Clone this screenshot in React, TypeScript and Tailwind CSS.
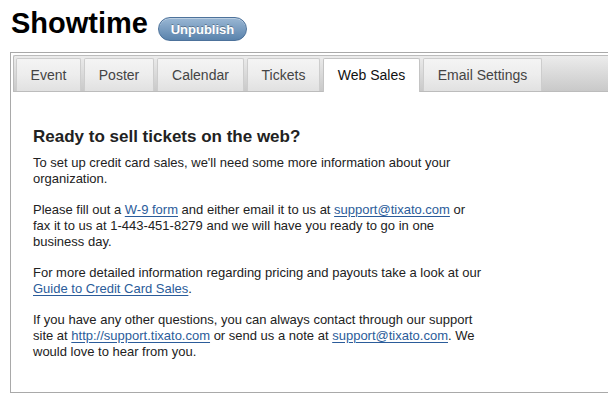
const tabs = [
  { label: "Event", w: "w-[65px]" },
  { label: "Poster", w: "w-[70px]" },
  { label: "Calendar", w: "w-[87px]" },
  { label: "Tickets", w: "w-[73px]" },
  { label: "Web Sales", w: "w-[97px]" },
  { label: "Email Settings", w: "w-[119px]" },
];
const active = "Web Sales";

function Link({ children }: { children: React.ReactNode }) {
  return (
    <a href="#" className="text-[#2b5c9a] underline underline-offset-[2px]">
      {children}
    </a>
  );
}

export default function App() {
  return (
    <div className="w-[608px] h-[403px] overflow-hidden bg-white font-['Liberation_Sans',Arial,sans-serif] text-[#222]">
      {/* Header */}
      <div className="flex items-start pt-[6px] pl-[11px]">
        <h1 className="text-[29px] leading-[34px] font-bold text-black">Showtime</h1>
        <button className="ml-[10px] mt-[11px] h-[24px] w-[89px] rounded-full border border-[#4d729b] bg-gradient-to-b from-[#9ab7d4] to-[#5a83ac] text-white text-[13px] font-bold leading-none shadow-[inset_0_1px_0_rgba(255,255,255,0.35)] [text-shadow:0_-1px_0_rgba(0,0,0,0.3)]">
          Unpublish
        </button>
      </div>

      {/* Panel */}
      <div className="ml-[10px] mt-[11px] w-[640px] border border-[#a9a9a9] border-r-0">
        {/* Tab bar */}
        <div className="mt-[2px] ml-[2px] flex items-end gap-[3px] pl-[2px] pt-[2px] border border-[#bcbcbc] border-r-0 rounded-tl-[2px] bg-gradient-to-b from-[#ececec] to-[#c9c9c9]">
          {tabs.map((t) =>
            t.label === active ? (
              <div
                key={t.label}
                className={`${t.w} h-[34px] -mb-px flex items-center justify-center bg-white border border-b-0 border-[#c4c4c4] rounded-t-[2px] text-[14px] text-[#111]`}
              >
                {t.label}
              </div>
            ) : (
              <div
                key={t.label}
                className={`${t.w} h-[33px] flex items-center justify-center border border-b-0 border-[#cdcdcd] rounded-t-[2px] bg-gradient-to-b from-[#f4f4f4] via-[#ededed] to-[#e1e1e1] text-[14px] text-[#444]`}
              >
                {t.label}
              </div>
            )
          )}
        </div>

        {/* Content */}
        <div className="pl-[22px] pt-[34px] pb-[32px] w-[473px]">
          <h2 className="text-[17px] leading-[22px] font-bold text-[#222] mb-[7px]">
            Ready to sell tickets on the web?
          </h2>
          <div className="text-[13px] leading-[16px] space-y-[15px]">
            <p>
              To set up credit card sales, we'll need some more information about your
              organization.
            </p>
            <p>
              Please fill out a <Link>W-9 form</Link> and either email it to us at{" "}
              <Link>support@tixato.com</Link> or fax it to us at 1-443-451-8279 and we will
              have you ready to go in one business day.
            </p>
            <p>
              For more detailed information regarding pricing and payouts take a look at our{" "}
              <Link>Guide to Credit Card Sales</Link>.
            </p>
            <p>
              If you have any other questions, you can always contact through our support site
              at <Link>http://support.tixato.com</Link> or send us a note at{" "}
              <Link>support@tixato.com</Link>. We would love to hear from you.
            </p>
          </div>
        </div>
      </div>
    </div>
  );
}
